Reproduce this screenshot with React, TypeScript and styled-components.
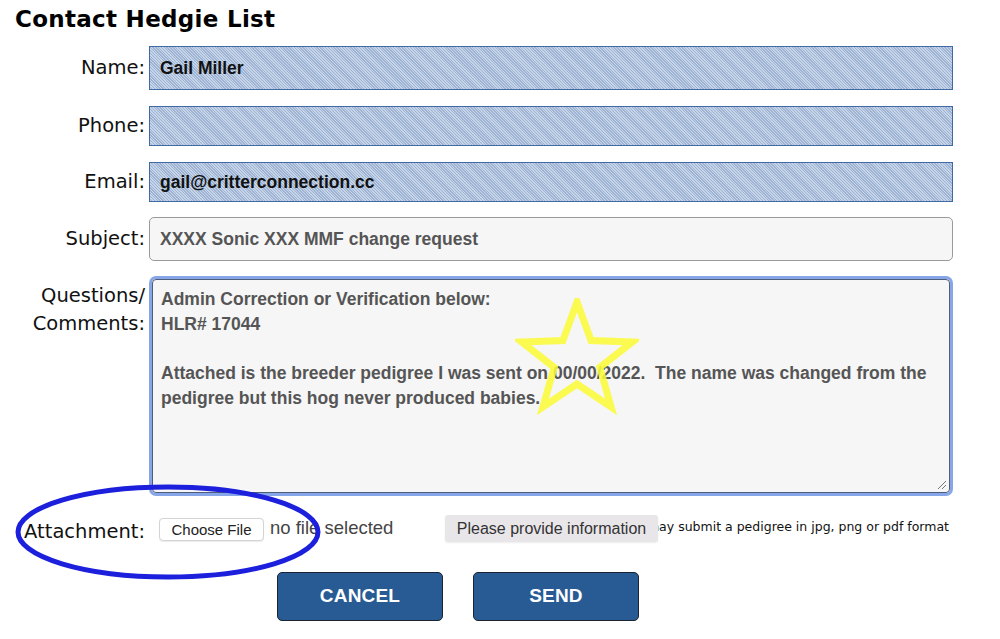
import React from "react";
import styled, { createGlobalStyle } from "styled-components";

const Global = createGlobalStyle`
  html, body { margin: 0; padding: 0; background: #ffffff; }
  body { font-family: "DejaVu Sans", Verdana, sans-serif; }
`;

const Page = styled.div`
  position: relative;
  width: 1000px;
  height: 639px;
  overflow: hidden;
  background: #fff;
`;

const Title = styled.h1`
  margin: 0;
  padding: 5px 0 0 15px;
  font-family: "DejaVu Sans", Verdana, sans-serif;
  font-weight: bold;
  font-size: 23px;
  line-height: 29px;
  color: #000;
  letter-spacing: 0.3px;
`;

const Form = styled.div`
  display: grid;
  grid-template-columns: 145px 804px;
  column-gap: 4px;
  margin-top: 12px;
`;

const Label = styled.label<{ $top?: boolean; $mb: number; $h: number }>`
  font-family: "DejaVu Sans", Verdana, sans-serif;
  font-size: 19.5px;
  color: #111;
  text-align: right;
  display: flex;
  flex-direction: column;
  justify-content: ${(p) => (p.$top ? "flex-start" : "center")};
  align-items: flex-end;
  height: ${(p) => p.$h}px;
  margin-bottom: ${(p) => p.$mb}px;
  padding-top: ${(p) => (p.$top ? "6px" : "0")};
  box-sizing: border-box;
  line-height: 28px;
`;

const AutoField = styled.div<{ $h: number; $mb: number }>`
  height: ${(p) => p.$h}px;
  margin-bottom: ${(p) => p.$mb}px;
  box-sizing: border-box;
  border: 1px solid #3f6aa3;
  background: repeating-linear-gradient(
    45deg,
    #c6d4e9 0px,
    #c6d4e9 1px,
    #9fb4d3 1px,
    #9fb4d3 2px
  );
  display: flex;
  align-items: center;
  padding-left: 10px;
  font-family: "Liberation Sans", Arial, sans-serif;
  font-weight: bold;
  font-size: 17.5px;
  color: #111;
`;

const PlainField = styled.div<{ $h: number; $mb: number }>`
  height: ${(p) => p.$h}px;
  margin-bottom: ${(p) => p.$mb}px;
  box-sizing: border-box;
  border: 1.5px solid #9a9a9a;
  border-radius: 5px;
  background: #f6f6f6;
  display: flex;
  align-items: center;
  padding-left: 10px;
  font-family: "Liberation Sans", Arial, sans-serif;
  font-weight: bold;
  font-size: 17.5px;
  color: #555;
`;

const AreaWrap = styled.div`
  position: relative;
  height: 220px;
  box-sizing: border-box;
  border: 3px solid #87a6ea;
  border-radius: 7px;
  margin-bottom: 16px;
`;

const Area = styled.div`
  height: 100%;
  box-sizing: border-box;
  border: 1px solid #4e5d78;
  border-radius: 4px;
  background: #f6f6f6;
  padding: 7px 8px;
  font-family: "Liberation Sans", Arial, sans-serif;
  font-weight: bold;
  font-size: 17.5px;
  line-height: 24.7px;
  color: #555;
  white-space: pre-wrap;
`;

const Grip = styled.svg`
  position: absolute;
  right: 3px;
  bottom: 3px;
`;

const Star = styled.svg`
  position: absolute;
  left: 363px;
  top: 19px;
  pointer-events: none;
`;

const AttachRow = styled.div`
  position: relative;
  display: flex;
  align-items: center;
  height: 30px;
  margin-top: 2px;
`;

const AttachLabel = styled.span`
  width: 145px;
  text-align: right;
  font-family: "DejaVu Sans", Verdana, sans-serif;
  font-size: 19.5px;
  color: #111;
  margin-top: 4px;
`;

const FileButton = styled.span`
  margin-left: 14px;
  box-sizing: border-box;
  width: 105px;
  height: 23px;
  border: 1px solid #d4d4d4;
  border-radius: 4px;
  background: #fff;
  display: inline-flex;
  align-items: center;
  justify-content: center;
  font-family: "Liberation Sans", Arial, sans-serif;
  font-size: 15px;
  color: #222;
  box-shadow: 0 0.5px 1px rgba(0, 0, 0, 0.08);
`;

const NoFile = styled.span`
  margin-left: 6px;
  font-family: "Liberation Sans", Arial, sans-serif;
  font-size: 18.5px;
  color: #444;
  margin-top: -2px;
`;

const Note = styled.span`
  margin-left: auto;
  margin-right: 51px;
  font-family: "DejaVu Sans", Verdana, sans-serif;
  font-size: 12.5px;
  color: #111;
  margin-top: -6px;
`;

const Tooltip = styled.div`
  position: absolute;
  left: 445px;
  top: 1px;
  width: 213px;
  height: 27px;
  box-sizing: border-box;
  background: #e9e6ea;
  border-radius: 3px;
  box-shadow: 0 1px 2px rgba(0, 0, 0, 0.08);
  display: flex;
  align-items: center;
  justify-content: center;
  font-family: "Liberation Sans", Arial, sans-serif;
  font-size: 16px;
  color: #333;
`;

const Ellipse = styled.svg`
  position: absolute;
  left: 14px;
  top: -31px;
  pointer-events: none;
`;

const Buttons = styled.div`
  display: flex;
  gap: 30px;
  padding-left: 277px;
  margin-top: 28px;
`;

const ActionButton = styled.button`
  width: 166px;
  height: 49px;
  box-sizing: border-box;
  background: #285b94;
  border: 1px solid #1b2230;
  border-radius: 5px;
  color: #fff;
  font-family: "Liberation Sans", Arial, sans-serif;
  font-weight: bold;
  font-size: 19px;
  letter-spacing: 0.2px;
  display: flex;
  align-items: center;
  justify-content: center;
  padding: 0 0 2px 0;
`;

const starPoints = (() => {
  const cx = 60, cy = 62, R = 58, r = 24;
  const pts: string[] = [];
  for (let i = 0; i < 10; i++) {
    const rad = i % 2 === 0 ? R : r;
    const a = -Math.PI / 2 + (i * Math.PI) / 5;
    pts.push(`${(cx + rad * Math.cos(a)).toFixed(1)},${(cy + rad * Math.sin(a)).toFixed(1)}`);
  }
  return pts.join(" ");
})();

export default function App() {
  return (
    <Page>
      <Global />
      <Title>Contact Hedgie List</Title>
      <Form>
        <Label $h={44} $mb={16}>Name:</Label>
        <AutoField $h={44} $mb={16}>Gail Miller</AutoField>

        <Label $h={40} $mb={16}>Phone:</Label>
        <AutoField $h={40} $mb={16} />

        <Label $h={40} $mb={15}>Email:</Label>
        <AutoField $h={40} $mb={15}>gail@critterconnection.cc</AutoField>

        <Label $h={44} $mb={15}>Subject:</Label>
        <PlainField $h={44} $mb={15}>XXXX Sonic XXX MMF change request</PlainField>

        <Label $h={220} $mb={16} $top>
          <span>Questions/</span>
          <span>Comments:</span>
        </Label>
        <AreaWrap>
          <Area>{"Admin Correction or Verification below:\nHLR# 17044\n\nAttached is the breeder pedigree I was sent on 00/00/2022.  The name was changed from the pedigree but this hog never produced babies."}</Area>
          <Grip width="10" height="10" viewBox="0 0 10 10">
            <line x1="1" y1="9" x2="9" y2="1" stroke="#777" strokeWidth="1" />
            <line x1="5" y1="9" x2="9" y2="5" stroke="#777" strokeWidth="1" />
          </Grip>
          <Star width="124" height="124" viewBox="0 0 120 124">
            <polygon
              points={starPoints}
              fill="none"
              stroke="#fbfb3a"
              strokeOpacity="0.88"
              strokeWidth="7"
              strokeLinejoin="miter"
            />
          </Star>
        </AreaWrap>
      </Form>

      <AttachRow>
        <AttachLabel>Attachment:</AttachLabel>
        <FileButton>Choose File</FileButton>
        <NoFile>no file selected</NoFile>
        <Note>You may submit a pedigree in jpg, png or pdf format</Note>
        <Tooltip>Please provide information</Tooltip>
        <Ellipse width="310" height="100" viewBox="0 0 310 100">
          <ellipse cx="154" cy="49" rx="150" ry="45" fill="none" stroke="#1c20dc" strokeWidth="5" />
        </Ellipse>
      </AttachRow>

      <Buttons>
        <ActionButton>CANCEL</ActionButton>
        <ActionButton>SEND</ActionButton>
      </Buttons>
    </Page>
  );
}
